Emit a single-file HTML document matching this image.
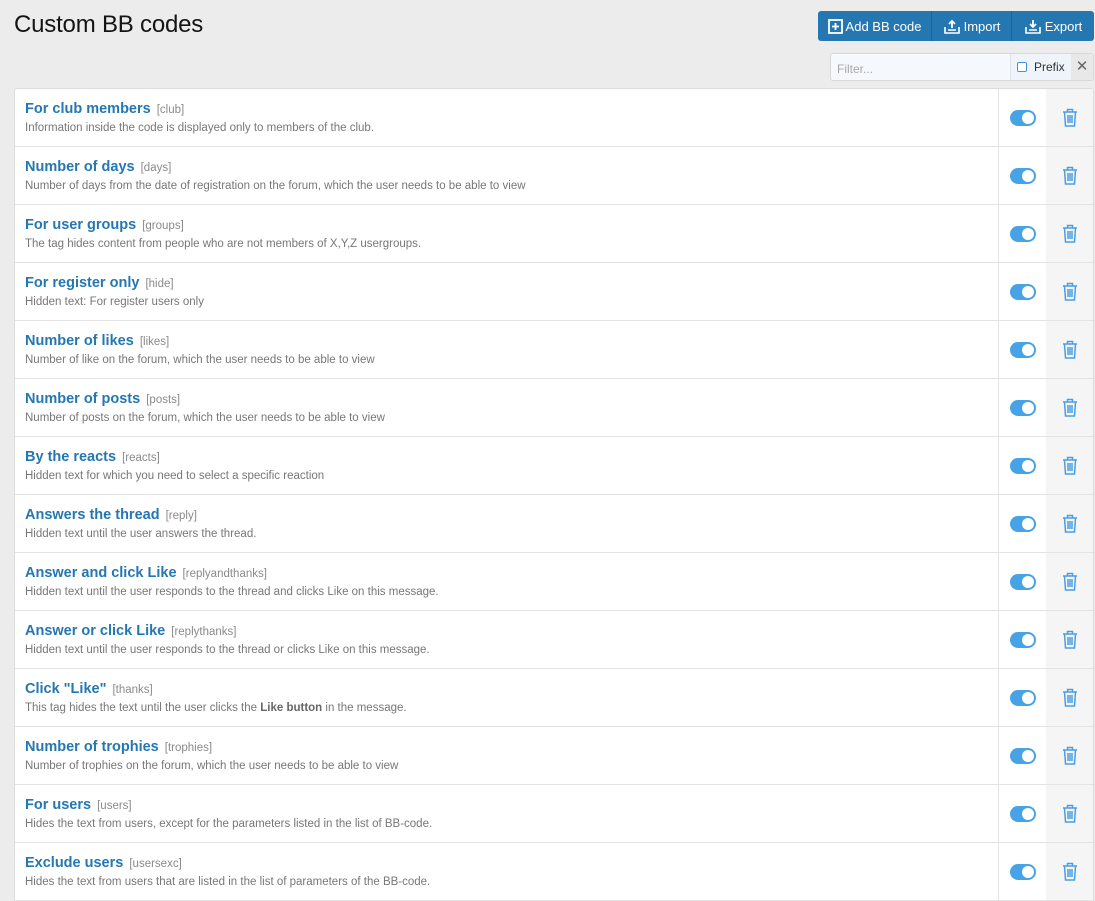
<!DOCTYPE html>
<html><head><meta charset="utf-8"><style>
*{box-sizing:border-box;margin:0;padding:0}
body{width:1095px;height:901px;overflow:hidden;background:#ececec;font-family:"Liberation Sans",sans-serif;position:relative}
h1{position:absolute;left:14px;top:11px;font-size:24px;font-weight:normal;color:#141414;letter-spacing:-0.2px}
.btns{position:absolute;left:818px;top:11px;width:276px;height:30px;background:#2577b1;border-radius:3px;display:flex;color:#fff;font-size:13px}
.btns div{display:flex;align-items:center;justify-content:center;border-right:1px solid #1d6599;height:100%}
.btns div:last-child{border:none}
.btns svg{margin-right:3px}
.filter{position:absolute;left:830px;top:53px;width:264px;height:28px;border:1px solid #d8d8d8;border-radius:3px;background:#f5f9fd;display:flex;font-size:12px}
.filter .in{width:180px;color:#a8a8a8;padding:8px 6px;border-right:1px solid #dde4ec}
.filter .pf{width:60px;background:#eef4fa;display:flex;align-items:center;padding-left:6px;color:#333}
.filter .pf span{width:10px;height:10px;border:1px solid #4a90d9;border-radius:2px;margin-right:7px;background:#fff}
.filter .x{flex:1;background:#e8e8e8;color:#666;text-align:center;line-height:26px;font-size:15px}
.list{position:absolute;left:14px;top:88px;width:1080px;background:#fff;border:1px solid #dcdcdc;border-bottom:none;border-radius:3px 3px 0 0}
.row{height:58px;border-bottom:1px solid #e4e4e4;display:flex;position:relative}
.row .main{flex:1;padding:12px 10px 0}
.t{font-size:14.5px;font-weight:bold;color:#2577b1}
.t small{font-size:11.5px;font-weight:normal;color:#8a8a8a;margin-left:2px}
.d{font-size:11.5px;color:#777;margin-top:5px}
.d b{color:#666}
.tg{width:48px;border-left:1px solid #e4e4e4;display:flex;align-items:center;justify-content:center}
.sw{width:26px;height:16px;border-radius:8px;background:#47a3e6;position:relative}
.sw:after{content:"";position:absolute;right:2px;top:2px;width:12px;height:12px;border-radius:50%;background:#fff}
.del{width:47px;background:#f5f5f5;display:flex;align-items:center;justify-content:center}
</style></head><body>
<h1>Custom BB codes</h1>
<div class="btns">
<div style="width:114px"><svg width="15" height="15" viewBox="0 0 15 15"><rect x="1" y="1" width="13" height="13" fill="none" stroke="#fff" stroke-width="1.8"/><path d="M7.5 4v7M4 7.5h7" stroke="#fff" stroke-width="1.8"/></svg>Add BB code</div>
<div style="width:80px"><svg width="18" height="15" viewBox="0 0 18 15"><path d="M2 8v6h14V8M5 11h8" fill="none" stroke="#fff" stroke-width="1.6"/><path d="M9 9V3M6 5l3-3 3 3" fill="none" stroke="#fff" stroke-width="1.8"/></svg>Import</div>
<div style="width:82px"><svg width="18" height="15" viewBox="0 0 18 15"><path d="M2 8v6h14V8M5 11h8" fill="none" stroke="#fff" stroke-width="1.6"/><path d="M9 1v7M6 5l3 3 3-3" fill="none" stroke="#fff" stroke-width="1.8"/></svg>Export</div>
</div>
<div class="filter"><div class="in">Filter...</div><div class="pf"><span></span>Prefix</div><div class="x">✕</div></div>
<div class="list">
<div class="row"><div class="main"><div class="t">For club members <small>[club]</small></div><div class="d">Information inside the code is displayed only to members of the club.</div></div><div class="tg"><div class="sw"></div></div><div class="del">T</div></div>
<div class="row"><div class="main"><div class="t">Number of days <small>[days]</small></div><div class="d">Number of days from the date of registration on the forum, which the user needs to be able to view</div></div><div class="tg"><div class="sw"></div></div><div class="del">T</div></div>
<div class="row"><div class="main"><div class="t">For user groups <small>[groups]</small></div><div class="d">The tag hides content from people who are not members of X,Y,Z usergroups.</div></div><div class="tg"><div class="sw"></div></div><div class="del">T</div></div>
<div class="row"><div class="main"><div class="t">For register only <small>[hide]</small></div><div class="d">Hidden text: For register users only</div></div><div class="tg"><div class="sw"></div></div><div class="del">T</div></div>
<div class="row"><div class="main"><div class="t">Number of likes <small>[likes]</small></div><div class="d">Number of like on the forum, which the user needs to be able to view</div></div><div class="tg"><div class="sw"></div></div><div class="del">T</div></div>
<div class="row"><div class="main"><div class="t">Number of posts <small>[posts]</small></div><div class="d">Number of posts on the forum, which the user needs to be able to view</div></div><div class="tg"><div class="sw"></div></div><div class="del">T</div></div>
<div class="row"><div class="main"><div class="t">By the reacts <small>[reacts]</small></div><div class="d">Hidden text for which you need to select a specific reaction</div></div><div class="tg"><div class="sw"></div></div><div class="del">T</div></div>
<div class="row"><div class="main"><div class="t">Answers the thread <small>[reply]</small></div><div class="d">Hidden text until the user answers the thread.</div></div><div class="tg"><div class="sw"></div></div><div class="del">T</div></div>
<div class="row"><div class="main"><div class="t">Answer and click Like <small>[replyandthanks]</small></div><div class="d">Hidden text until the user responds to the thread and clicks Like on this message.</div></div><div class="tg"><div class="sw"></div></div><div class="del">T</div></div>
<div class="row"><div class="main"><div class="t">Answer or click Like <small>[replythanks]</small></div><div class="d">Hidden text until the user responds to the thread or clicks Like on this message.</div></div><div class="tg"><div class="sw"></div></div><div class="del">T</div></div>
<div class="row"><div class="main"><div class="t">Click "Like" <small>[thanks]</small></div><div class="d">This tag hides the text until the user clicks the <b>Like button</b> in the message.</div></div><div class="tg"><div class="sw"></div></div><div class="del">T</div></div>
<div class="row"><div class="main"><div class="t">Number of trophies <small>[trophies]</small></div><div class="d">Number of trophies on the forum, which the user needs to be able to view</div></div><div class="tg"><div class="sw"></div></div><div class="del">T</div></div>
<div class="row"><div class="main"><div class="t">For users <small>[users]</small></div><div class="d">Hides the text from users, except for the parameters listed in the list of BB-code.</div></div><div class="tg"><div class="sw"></div></div><div class="del">T</div></div>
<div class="row"><div class="main"><div class="t">Exclude users <small>[usersexc]</small></div><div class="d">Hides the text from users that are listed in the list of parameters of the BB-code.</div></div><div class="tg"><div class="sw"></div></div><div class="del">T</div></div>
</div>
<script>
document.querySelectorAll('.del').forEach(function(e){e.innerHTML='<svg width="16" height="19" viewBox="0 0 16 19"><path d="M1 4h14M5.5 4V1.5h5V4M2.5 4l1 14h9l1-14M6 7v8M8 7v8M10 7v8" fill="none" stroke="#4a9ee3" stroke-width="1.5"/></svg>';});
</script>
</body></html>
